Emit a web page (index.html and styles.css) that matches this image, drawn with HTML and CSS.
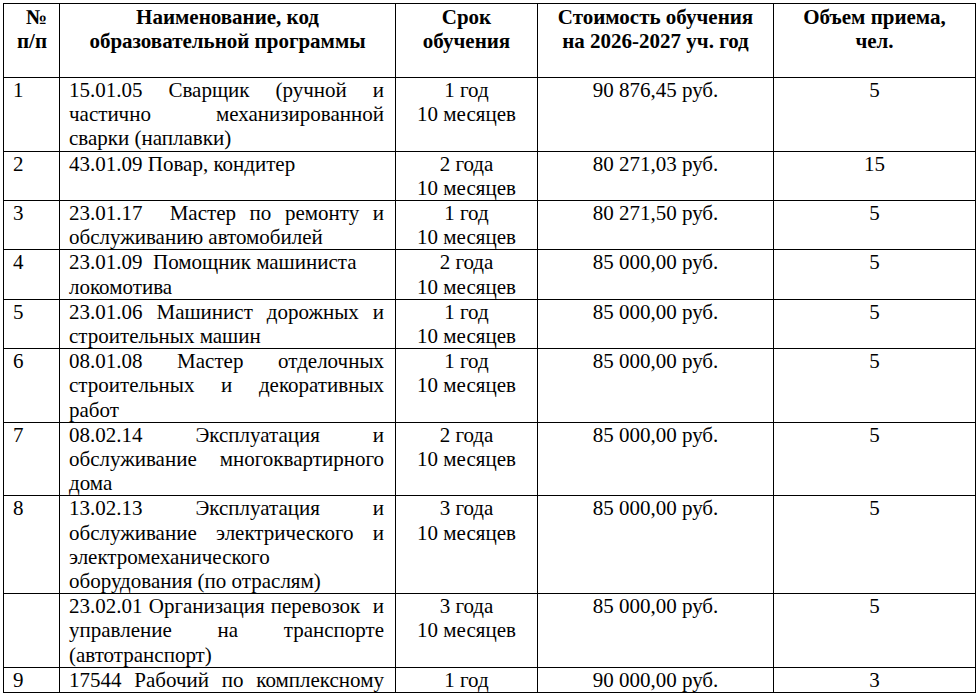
FILE: index.html
```html
<!DOCTYPE html>
<html lang="ru">
<head>
<meta charset="utf-8">
<title>Стоимость обучения</title>
<link rel="stylesheet" href="styles.css">
</head>
<body>
<table class="price">
  <colgroup>
    <col class="c-num">
    <col class="c-name">
    <col class="c-term">
    <col class="c-cost">
    <col class="c-vol">
  </colgroup>
  <thead>
    <tr>
      <th class="h-num">№<br>п/п</th>
      <th>Наименование, код<br>образовательной программы</th>
      <th>Срок<br>обучения</th>
      <th>Стоимость обучения<br>на 2026-2027 уч. год</th>
      <th>Объем приема,<br>чел.</th>
    </tr>
  </thead>
  <tbody>
    <tr>
      <td class="num">1</td>
      <td class="name"><span class="jl">15.01.05 Сварщик (ручной и</span><span class="jl">частично механизированной</span><span class="ll">сварки (наплавки)</span></td>
      <td class="ctr">1 год<br>10 месяцев</td>
      <td class="ctr">90 876,45 руб.</td>
      <td class="ctr">5</td>
    </tr>
    <tr>
      <td class="num">2</td>
      <td class="name"><span class="ll">43.01.09 Повар, кондитер</span></td>
      <td class="ctr">2 года<br>10 месяцев</td>
      <td class="ctr">80 271,03 руб.</td>
      <td class="ctr">15</td>
    </tr>
    <tr>
      <td class="num">3</td>
      <td class="name"><span class="jl">23.01.17 &nbsp;Мастер по ремонту и</span><span class="ll">обслуживанию автомобилей</span></td>
      <td class="ctr">1 год<br>10 месяцев</td>
      <td class="ctr">80 271,50 руб.</td>
      <td class="ctr">5</td>
    </tr>
    <tr>
      <td class="num">4</td>
      <td class="name"><span class="ll">23.01.09 &nbsp;Помощник машиниста</span><span class="ll">локомотива</span></td>
      <td class="ctr">2 года<br>10 месяцев</td>
      <td class="ctr">85 000,00 руб.</td>
      <td class="ctr">5</td>
    </tr>
    <tr>
      <td class="num">5</td>
      <td class="name"><span class="jl">23.01.06 Машинист дорожных и</span><span class="ll">строительных машин</span></td>
      <td class="ctr">1 год<br>10 месяцев</td>
      <td class="ctr">85 000,00 руб.</td>
      <td class="ctr">5</td>
    </tr>
    <tr>
      <td class="num">6</td>
      <td class="name"><span class="jl">08.01.08 Мастер отделочных</span><span class="jl">строительных и декоративных</span><span class="ll">работ</span></td>
      <td class="ctr">1 год<br>10 месяцев</td>
      <td class="ctr">85 000,00 руб.</td>
      <td class="ctr">5</td>
    </tr>
    <tr>
      <td class="num">7</td>
      <td class="name"><span class="jl">08.02.14 Эксплуатация и</span><span class="jl">обслуживание многоквартирного</span><span class="ll">дома</span></td>
      <td class="ctr">2 года<br>10 месяцев</td>
      <td class="ctr">85 000,00 руб.</td>
      <td class="ctr">5</td>
    </tr>
    <tr>
      <td class="num">8</td>
      <td class="name"><span class="jl">13.02.13 Эксплуатация и</span><span class="jl">обслуживание электрического и</span><span class="ll">электромеханического</span><span class="ll">оборудования (по отраслям)</span></td>
      <td class="ctr">3 года<br>10 месяцев</td>
      <td class="ctr">85 000,00 руб.</td>
      <td class="ctr">5</td>
    </tr>
    <tr>
      <td class="num"></td>
      <td class="name"><span class="jl">23.02.01 Организация перевозок &nbsp;и</span><span class="jl">управление на транспорте</span><span class="ll">(автотранспорт)</span></td>
      <td class="ctr">3 года<br>10 месяцев</td>
      <td class="ctr">85 000,00 руб.</td>
      <td class="ctr">5</td>
    </tr>
    <tr>
      <td class="num">9</td>
      <td class="name"><span class="jl">17544 Рабочий по комплексному</span></td>
      <td class="ctr">1 год</td>
      <td class="ctr">90 000,00 руб.</td>
      <td class="ctr">3</td>
    </tr>
  </tbody>
</table>
</body>
</html>
```
FILE: styles.css
```css
html, body {
  margin: 0;
  padding: 0;
  background: #fff;
}

body {
  font-family: "Liberation Serif", "Times New Roman", serif;
  font-size: 21px;
  line-height: 24.2px;
  color: #000;
  overflow: hidden;
}

.price {
  border-collapse: collapse;
  table-layout: fixed;
  width: 972px;
  margin: 3px 0 0 3px;
}

.c-num { width: 56px; }
.c-name { width: 336px; }
.c-term { width: 142px; }
.c-cost { width: 236px; }
.c-vol { width: 202px; }

.price th,
.price td {
  border: 1px solid #000;
  vertical-align: top;
  padding: 0;
}

.price th {
  font-weight: bold;
  text-align: center;
  padding: 1px 2px 23.5px;
}

.price th.h-num {
  text-align: right;
  padding-right: 12px;
}

.num {
  padding-left: 9px !important;
  text-align: left;
}

.name {
  padding-left: 9px !important;
  padding-right: 11px !important;
}

.jl {
  display: block;
  text-align: justify;
  text-align-last: justify;
  white-space: nowrap;
}

.ll {
  display: block;
  text-align: left;
  white-space: nowrap;
}

.ctr {
  text-align: center;
}
```
